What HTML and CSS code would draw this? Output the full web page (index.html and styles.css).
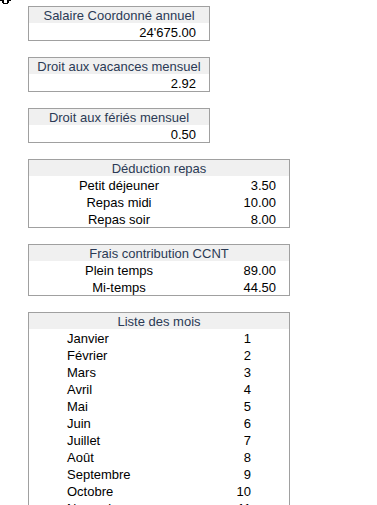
FILE: index.html
```html
<!DOCTYPE html>
<html lang="fr">
<head>
<meta charset="utf-8">
<title>Paramètres</title>
<link rel="stylesheet" href="styles.css">
</head>
<body>
<svg class="cursor" width="12" height="6" viewBox="0 0 12 6"><path d="M0 0h4v2h3V0h4v1H9v2H8v1H3V3H2V1H0z" fill="#000"/><path d="M4 2h3v1H4z" fill="#fff"/></svg>
<div class="sheet">
  <div class="box narrow">
    <div class="head">Salaire Coordonné annuel</div>
    <div class="val">24'675.00</div>
  </div>
  <div class="box narrow">
    <div class="head">Droit aux vacances mensuel</div>
    <div class="val">2.92</div>
  </div>
  <div class="box narrow">
    <div class="head">Droit aux fériés mensuel</div>
    <div class="val">0.50</div>
  </div>
  <div class="box wide">
    <div class="head">Déduction repas</div>
    <div class="row"><span class="lbl">Petit déjeuner</span><span class="num">3.50</span></div>
    <div class="row"><span class="lbl">Repas midi</span><span class="num">10.00</span></div>
    <div class="row"><span class="lbl">Repas soir</span><span class="num">8.00</span></div>
  </div>
  <div class="box wide">
    <div class="head">Frais contribution CCNT</div>
    <div class="row"><span class="lbl">Plein temps</span><span class="num">89.00</span></div>
    <div class="row"><span class="lbl">Mi-temps</span><span class="num">44.50</span></div>
  </div>
  <div class="box wide">
    <div class="head">Liste des mois</div>
    <div class="mrow"><span>Janvier</span><span>1</span></div>
    <div class="mrow"><span>Février</span><span>2</span></div>
    <div class="mrow"><span>Mars</span><span>3</span></div>
    <div class="mrow"><span>Avril</span><span>4</span></div>
    <div class="mrow"><span>Mai</span><span>5</span></div>
    <div class="mrow"><span>Juin</span><span>6</span></div>
    <div class="mrow"><span>Juillet</span><span>7</span></div>
    <div class="mrow"><span>Août</span><span>8</span></div>
    <div class="mrow"><span>Septembre</span><span>9</span></div>
    <div class="mrow"><span>Octobre</span><span>10</span></div>
    <div class="mrow"><span>Novembre</span><span>11</span></div>
  </div>
</div>
</body>
</html>
```
FILE: styles.css
```css
html, body {
  margin: 0;
  padding: 0;
  background: #fff;
}
body {
  font-family: "Liberation Sans", Arial, sans-serif;
  font-size: 13px;
  color: #000;
  position: relative;
  height: 505px;
  overflow: hidden;
}
.cursor {
  position: absolute;
  left: 0;
  top: 0;
}
.sheet {
  padding: 6px 0 0 28px;
  display: flex;
  flex-direction: column;
  align-items: flex-start;
  gap: 16px;
}
.box {
  border: 1px solid #a0a0a0;
  background: #fff;
}
.narrow { width: 180px; }
.wide { width: 260px; }
.head {
  height: 16px;
  line-height: 17px;
  background: #f0f0f0;
  color: #2b3a55;
  text-align: center;
}
.val {
  height: 17px;
  line-height: 19px;
  text-align: right;
  padding-right: 13px;
  overflow: hidden;
}
.row {
  display: flex;
  height: 17px;
  line-height: 19px;
  overflow: hidden;
}
.lbl {
  width: 180px;
  text-align: center;
}
.num {
  flex: 1;
  text-align: right;
  padding-right: 13px;
}
.mrow {
  display: flex;
  justify-content: space-between;
  height: 17px;
  line-height: 19px;
  padding: 0 38px;
  overflow: hidden;
}
```
